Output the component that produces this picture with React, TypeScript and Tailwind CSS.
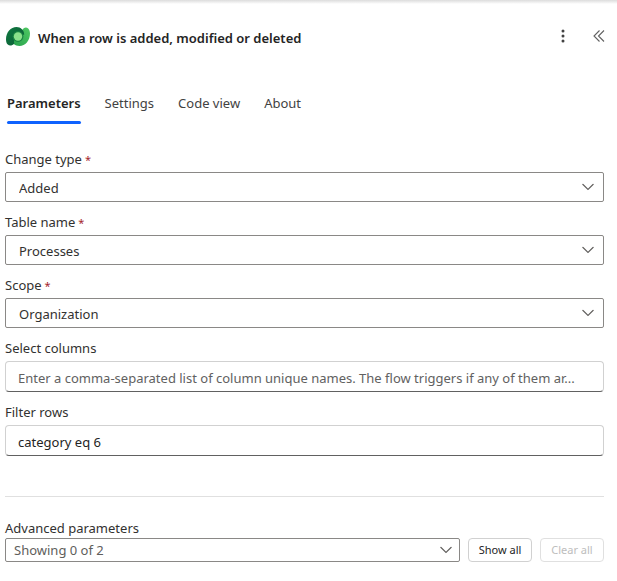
import { useState } from 'react';
import type { ReactNode } from 'react';
import clsx from 'clsx';

const tabs = ['Parameters', 'Settings', 'Code view', 'About'];

const DataverseLogo = () => (
  <svg viewBox="0 0 24 19" className="h-[19px] w-6 shrink-0" aria-hidden="true">
    <defs>
      <linearGradient id="dv-left" x1="0" y1="0" x2="1" y2="1">
        <stop offset="0" stopColor="#0f7a41" />
        <stop offset="1" stopColor="#0c5a35" />
      </linearGradient>
      <linearGradient id="dv-right" x1="0" y1="1" x2="1" y2="0">
        <stop offset="0" stopColor="#27a04c" />
        <stop offset="1" stopColor="#4fc963" />
      </linearGradient>
    </defs>
    <path
      d="M16.5 2.5C18 .2 20.5-.2 22.2 1.4 23.4 2.6 24 4.4 24 6.6 24 13.8 19.2 19 13.5 19 9 19 6.2 16.4 6.2 12.6L12 12.5C15.4 12.5 17.6 10.8 15.5 7Z"
      fill="url(#dv-right)"
    />
    <path
      d="M8.3 16.5C6.2 18.9 3.5 19.2 1.8 17.6.6 16.4 0 14.6 0 12.4 0 5.2 4.8 0 10.5 0 14.8 0 18.2 3.2 18.2 7.6L12 9.5C9.5 11 7 13.8 8.3 16.5Z"
      fill="url(#dv-left)"
    />
    <circle cx="12" cy="9.5" r="5.4" fill="#1a8643" />
    <circle cx="12" cy="9.5" r="4.2" fill="#8be08b" />
  </svg>
);

const Chevron = ({ className }: { className: string }) => (
  <svg
    viewBox="0 0 12 7"
    className={clsx('pointer-events-none absolute top-1/2 h-[7px] w-3 -translate-y-1/2', className)}
    fill="none"
    stroke="#605e5c"
    strokeWidth="1.1"
    aria-hidden="true"
  >
    <path d="M.5.5 6 6 11.5.5" />
  </svg>
);

type FieldProps = {
  id: string;
  label: string;
  required?: boolean;
  children: ReactNode;
};

const Field = ({ id, label, required, children }: FieldProps) => (
  <div className="flex flex-col gap-[3px]">
    <label htmlFor={id} className="leading-5">
      {label}
      {required && <span className="ml-[3px] text-[11px] leading-none text-[#a4262c]">*</span>}
    </label>
    {children}
  </div>
);

const SelectField = ({ id, label, options }: { id: string; label: string; options: string[] }) => (
  <Field id={id} label={label} required>
    <div className="relative">
      <select
        id={id}
        className="block h-[30px] w-full appearance-none rounded-xs border border-[#8a8886] bg-white px-[13px] pt-1"
      >
        {options.map((option) => (
          <option key={option}>{option}</option>
        ))}
      </select>
      <Chevron className="right-2.5" />
    </div>
  </Field>
);

const inputClass =
  'block h-[31px] w-full rounded border border-[#d1d1d1] border-b-[#616161] bg-white px-3 pt-[3px] text-[#242424] placeholder:text-[#616161] placeholder:opacity-100';

const App = () => {
  const [activeTab, setActiveTab] = useState('Parameters');
  const [filter, setFilter] = useState('category eq 6');

  return (
    <div className="min-h-screen bg-white font-['Noto_Sans',sans-serif] text-[13px] text-[#323130]">
      <div className="h-1 bg-linear-to-b from-[#dcdcdc] to-white" />

      <header className="flex items-center gap-2 pl-1.5 pr-2 pt-5">
        <DataverseLogo />
        <h1 className="flex-1 pt-1 font-semibold leading-5 text-[#242424]">
          When a row is added, modified or deleted
        </h1>
        <button type="button" aria-label="More" className="flex size-5 items-center justify-center">
          <svg viewBox="0 0 4 14" className="h-3.5 w-1" fill="#424242" aria-hidden="true">
            <circle cx="2" cy="2" r="1.5" />
            <circle cx="2" cy="7" r="1.5" />
            <circle cx="2" cy="12" r="1.5" />
          </svg>
        </button>
        <button type="button" aria-label="Collapse" className="ml-2 flex size-5 items-center justify-center">
          <svg viewBox="0 0 12 12" className="size-3" fill="none" stroke="#616161" strokeWidth="1.1" aria-hidden="true">
            <path d="M6.5.5 1 6l5.5 5.5M11 .5 5.5 6l5.5 5.5" />
          </svg>
        </button>
      </header>

      <div role="tablist" className="flex gap-6 px-[7px] pt-[45px]">
        {tabs.map((tab) => (
          <button
            key={tab}
            type="button"
            role="tab"
            aria-selected={tab === activeTab}
            onClick={() => setActiveTab(tab)}
            className={clsx(
              'flex flex-col gap-2 leading-5',
              tab === activeTab ? 'font-semibold text-[#242424]' : 'text-[#424242]',
            )}
          >
            {tab}
            <span className={clsx('h-[3px] w-full rounded-full', tab === activeTab && 'bg-[#0f62fe]')} />
          </button>
        ))}
      </div>

      <main className="pl-[5px] pr-[13px] pt-[25px]">
        <div className="flex flex-col gap-2.5">
          <SelectField id="change-type" label="Change type" options={['Added', 'Modified', 'Deleted']} />
          <SelectField id="table-name" label="Table name" options={['Processes']} />
          <SelectField id="scope" label="Scope" options={['Organization', 'User']} />
          <Field id="select-columns" label="Select columns">
            <input
              id="select-columns"
              type="text"
              placeholder="Enter a comma-separated list of column unique names. The flow triggers if any of them ar..."
              className={inputClass}
            />
          </Field>
          <Field id="filter-rows" label="Filter rows">
            <input
              id="filter-rows"
              type="text"
              value={filter}
              onChange={(e) => setFilter(e.target.value)}
              className={inputClass}
            />
          </Field>
        </div>

        <hr className="mt-10 border-[#e0e0e0]" />

        <label htmlFor="advanced" className="mt-[21px] block leading-5">
          Advanced parameters
        </label>
        <div className="flex gap-2">
          <div className="relative flex-1">
            <select
              id="advanced"
              className="block h-6 w-full appearance-none rounded-xs border border-[#8a8886] bg-white px-2 pt-0.5 text-[#605e5c]"
            >
              <option>Showing 0 of 2</option>
            </select>
            <Chevron className="right-2" />
          </div>
          <button type="button" className="h-6 w-16 rounded border border-[#d1d1d1] text-[11px] text-[#242424]">
            Show all
          </button>
          <button type="button" disabled className="h-6 w-16 rounded border border-[#e0e0e0] text-[11px] text-[#bdbdbd]">
            Clear all
          </button>
        </div>
      </main>
    </div>
  );
};

export default App;
